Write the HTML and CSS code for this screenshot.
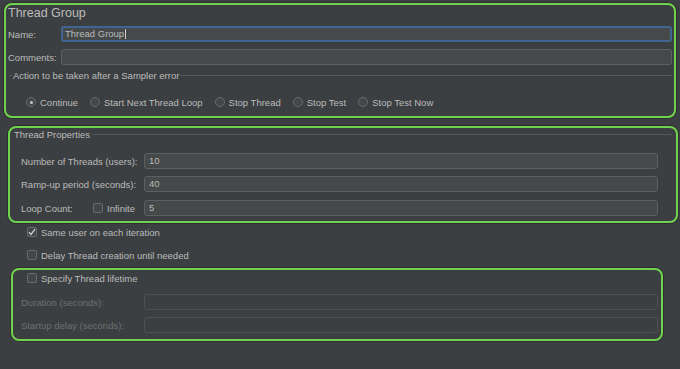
FILE: index.html
```html
<!DOCTYPE html>
<html lang="en">
<head>
    <meta charset="UTF-8">
    <title>Thread Group</title>
    <link rel="stylesheet" href="styles.css">
</head>
<body>
    <section class="box box-main">
        <div class="title">Thread Group</div>
        <div class="field-row name-row">
            <span class="label">Name:</span>
            <div class="input focused">Thread Group<span class="caret"></span></div>
        </div>
        <div class="field-row comments-row">
            <span class="label">Comments:</span>
            <div class="input"></div>
        </div>
        <div class="legend action-legend">
            <span class="rule short"></span>
            <span class="legend-text">Action to be taken after a Sampler error</span>
            <span class="rule"></span>
        </div>
        <div class="radios">
            <span class="radio-item"><span class="radio on"></span>Continue</span>
            <span class="radio-item"><span class="radio"></span>Start Next Thread Loop</span>
            <span class="radio-item"><span class="radio"></span>Stop Thread</span>
            <span class="radio-item"><span class="radio"></span>Stop Test</span>
            <span class="radio-item"><span class="radio"></span>Stop Test Now</span>
        </div>
    </section>

    <section class="box box-props">
        <div class="legend props-legend">
            <span class="legend-text">Thread Properties</span>
            <span class="rule"></span>
        </div>
        <div class="prop-row first">
            <span class="prop-label">Number of Threads (users):</span>
            <div class="input">10</div>
        </div>
        <div class="prop-row second">
            <span class="prop-label">Ramp-up period (seconds):</span>
            <div class="input">40</div>
        </div>
        <div class="prop-row third">
            <span class="prop-label loop">
                <span class="loop-text">Loop Count:</span>
                <span class="check"></span>
                <span>Infinite</span>
            </span>
            <div class="input">5</div>
        </div>
    </section>

    <div class="check-row same-user">
        <span class="check checked">
            <svg width="10" height="10" viewBox="0 0 10 10"><polyline points="2,5.2 4,7.4 8,2.2" fill="none" stroke="#d0d0d0" stroke-width="1.3"/></svg>
        </span>
        <span>Same user on each iteration</span>
    </div>
    <div class="check-row delay">
        <span class="check"></span>
        <span>Delay Thread creation until needed</span>
    </div>

    <section class="box box-life">
        <div class="check-row specify">
            <span class="check"></span>
            <span>Specify Thread lifetime</span>
        </div>
        <div class="prop-row life-first">
            <span class="prop-label disabled">Duration (seconds):</span>
            <div class="input off"></div>
        </div>
        <div class="prop-row life-second">
            <span class="prop-label disabled">Startup delay (seconds):</span>
            <div class="input off"></div>
        </div>
    </section>
</body>
</html>
```

FILE: styles.css
```css
body{
    margin:0;
    background:#3c3f41;
    color:#bbbbbb;
    font-family:"Liberation Sans", Arial, sans-serif;
    font-size:9.5px;
    width:680px;
    height:369px;
    overflow:hidden;
}

.box{
    box-sizing:border-box;
    border:2px solid #6fd44c;
    border-radius:8px;
    box-shadow:0 0 0 1px #2f2c33;
}

/* thread group box */
.box-main{
    margin:3px 4px 0 4px;
    height:115px;
    padding:0 2px;
}

.title{
    height:16px;
    line-height:16px;
    font-size:12.5px;
}

.field-row{
    display:flex;
    align-items:center;
    height:16px;
}

.name-row{ margin-top:5px; }
.comments-row{ margin-top:7px; }

.label{
    width:53px;
    flex:none;
}

.input{
    box-sizing:border-box;
    flex:1;
    height:16px;
    line-height:14px;
    background:#45494a;
    border:1px solid #5d6062;
    border-radius:3px;
    padding-left:4px;
}

.input.focused{
    border:2px solid #3f6590;
    line-height:12px;
    padding-left:2px;
}

.caret{
    display:inline-block;
    width:1px;
    height:10px;
    background:#cfcfcf;
    vertical-align:middle;
    margin-left:1px;
}

.input.off{
    background:#3c3f41;
    border-color:#4e5153;
}

.legend{
    display:flex;
    align-items:center;
}

.action-legend{ height:20px; }

.rule{
    flex:1;
    height:1px;
    background:#55585a;
}

.rule.short{
    flex:none;
    width:3px;
    margin-left:1px;
}

.legend-text{
    padding:0 2px 0 1px;
}

.radios{
    display:flex;
    align-items:center;
    gap:12px;
    height:16px;
    margin-top:9px;
    padding-left:18px;
}

.radio-item{
    display:flex;
    align-items:center;
    gap:4px;
}

.radio{
    box-sizing:border-box;
    width:10px;
    height:10px;
    border-radius:50%;
    border:1px solid #686b6d;
    background:#43474a;
    display:flex;
    align-items:center;
    justify-content:center;
}

.radio.on::after{
    content:"";
    width:3px;
    height:3px;
    border-radius:50%;
    background:#c8c8c8;
}

/* thread properties */
.box-props{
    margin:8px 2px 0 8px;
    height:97px;
    padding:0 18px 0 0;
}

.props-legend{
    height:12px;
    padding-left:3px;
    margin-right:-14px;
}

.prop-row{
    display:flex;
    align-items:center;
    height:16px;
    padding-left:11px;
}

.prop-row.first{ margin-top:13px; }
.prop-row.second{ margin-top:7px; }
.prop-row.third{ margin-top:8px; }

.prop-label{
    width:123px;
    flex:none;
}

.prop-label.disabled{
    color:#6c6f71;
}

.loop{
    display:flex;
    align-items:center;
    gap:4px;
}

.loop-text{
    width:68px;
}

.check{
    box-sizing:border-box;
    width:10px;
    height:10px;
    flex:none;
    border:1px solid #686b6d;
    border-radius:2px;
    background:#43474a;
    display:flex;
}

.check svg{
    margin:-1px;
}

.check-row{
    display:flex;
    align-items:center;
    gap:4px;
    height:14px;
    padding-left:27px;
}

.same-user{ margin-top:2px; }
.delay{ margin-top:9px; }

/* thread lifetime */
.box-life{
    margin:6px 0 0 11px;
    width:652px;
    height:73px;
    padding:0 3px 0 0;
}

.check-row.specify{
    margin-top:1px;
    padding-left:14px;
}

.prop-row.life-first{
    margin-top:9px;
    padding-left:8px;
}

.prop-row.life-second{
    margin-top:7px;
    padding-left:8px;
}
```
